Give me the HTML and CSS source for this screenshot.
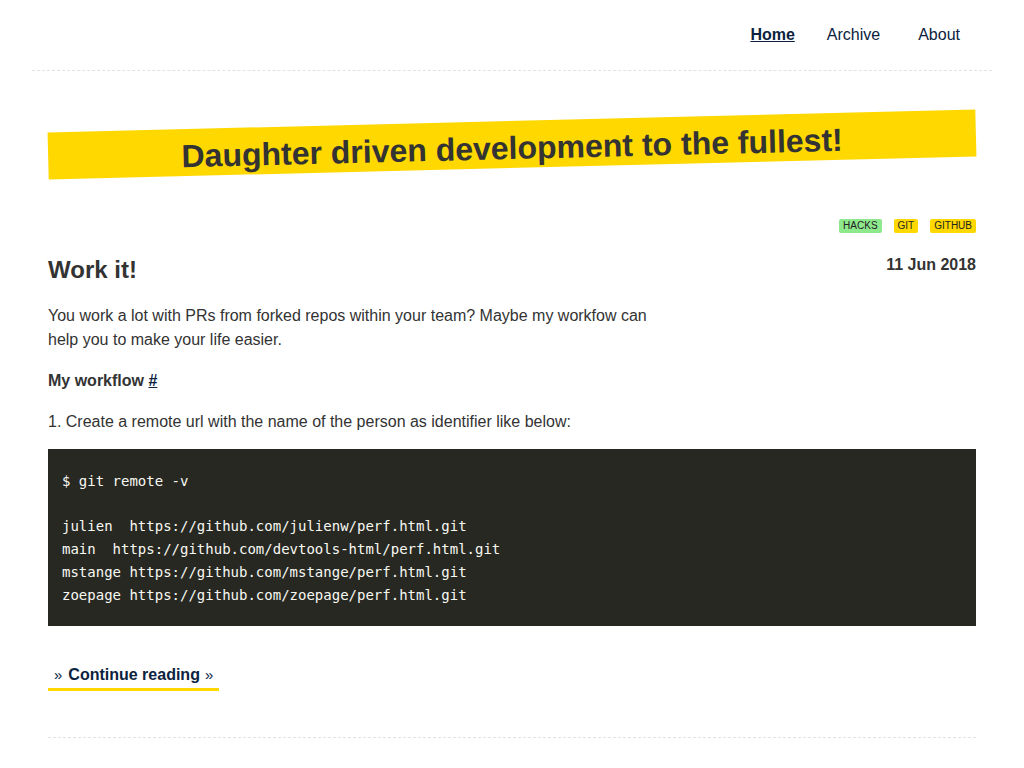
FILE: index.html
```html
<!DOCTYPE html>
<html>
<head>
<meta charset="utf-8">
<link rel="stylesheet" href="styles.css">
</head>
<body>
<header class="site-header">
  <nav class="nav">
    <a class="nav-link active" href="#">Home</a>
    <a class="nav-link" href="#">Archive</a>
    <a class="nav-link" href="#">About</a>
  </nav>
</header>
<main class="content">
  <div class="banner"><h1 class="banner-title">Daughter driven development to the fullest!</h1></div>
  <article class="post">
    <div class="tags">
      <span class="tag tag-green">HACKS</span>
      <span class="tag">GIT</span>
      <span class="tag">GITHUB</span>
    </div>
    <div class="post-head">
      <h2 class="post-title">Work it!</h2>
      <span class="post-date">11 Jun 2018</span>
    </div>
    <p class="intro">You work a lot with PRs from forked repos within your team? Maybe my workfow can help you to make your life easier.</p>
    <p class="sub"><strong>My workflow <a class="anchor" href="#">#</a></strong></p>
    <p class="step">1. Create a remote url with the name of the person as identifier like below:</p>
<pre class="code">$ git remote -v

julien  https://github.com/julienw/perf.html.git
main  https://github.com/devtools-html/perf.html.git
mstange https://github.com/mstange/perf.html.git
zoepage https://github.com/zoepage/perf.html.git</pre>
    <a class="more" href="#"><span class="chev">&raquo;</span>Continue reading<span class="chev">&raquo;</span></a>
  </article>
  <hr class="sep">
</main>
</body>
</html>
```

FILE: styles.css
```css
html, body {
  margin: 0;
  padding: 0;
  background: #fff;
}
body {
  font-family: "Liberation Sans", Arial, sans-serif;
  color: #333;
  font-size: 16px;
  line-height: 24px;
}
.site-header {
  margin: 0 32px;
  height: 70px;
  border-bottom: 1px dashed #e2e2e2;
  display: flex;
  justify-content: flex-end;
  align-items: flex-start;
}
.nav {
  display: flex;
  padding-top: 23px;
  padding-right: 32px;
}
.nav-link {
  color: #0b2240;
  text-decoration: none;
  margin-left: 32px;
}
.nav-link + .nav-link + .nav-link {
  margin-left: 38px;
}
.nav-link.active {
  font-weight: bold;
  text-decoration: underline;
}
.content {
  margin: 0 48px;
}
.banner {
  margin-top: 50px;
  height: 47px;
  background: #ffd800;
  transform: rotate(-1.42deg);
  display: flex;
  align-items: center;
  justify-content: center;
}
.banner-title {
  margin: 0;
  font-size: 32px;
  line-height: 36px;
  font-weight: bold;
  color: #333;
  transform: translate(0, 3px);
}
.post {
  padding-top: 51px;
}
.tags {
  display: flex;
  justify-content: flex-end;
  gap: 12px;
}
.tag {
  background: #ffd800;
  color: #222;
  font-size: 10px;
  line-height: 14px;
  padding: 0 4px;
  border-radius: 2px;
}
.tag-green {
  background: #8ee88c;
}
.post-head {
  display: flex;
  justify-content: space-between;
  align-items: flex-start;
  margin-top: 22px;
}
.post-title {
  margin: 0;
  font-size: 24px;
  line-height: 30px;
  font-weight: bold;
}
.post-date {
  font-weight: bold;
  line-height: 20px;
}
.intro {
  max-width: 610px;
  margin: 19px 0 0;
}
.sub {
  margin: 17px 0 0;
}
.anchor {
  color: #0b2240;
}
.step {
  margin: 17px 0 0;
}
.code {
  margin: 15px 0 0;
  background: #272822;
  color: #f8f8f2;
  font-family: "DejaVu Sans Mono", monospace;
  font-size: 14px;
  line-height: 22.7px;
  padding: 21px 14px 20px;
}
.more {
  display: inline-block;
  margin-top: 37px;
  padding: 0 6px 1px;
  font-weight: bold;
  color: #0b2240;
  text-decoration: none;
  border-bottom: 3px solid #ffd800;
  line-height: 24px;
}
.chev {
  font-weight: normal;
  font-size: 15px;
}
.chev:first-child {
  margin-right: 6px;
}
.chev:last-child {
  margin-left: 5px;
}
.sep {
  margin: 46px 0 0;
  border: 0;
  border-top: 1px dashed #e2e2e2;
}
```
